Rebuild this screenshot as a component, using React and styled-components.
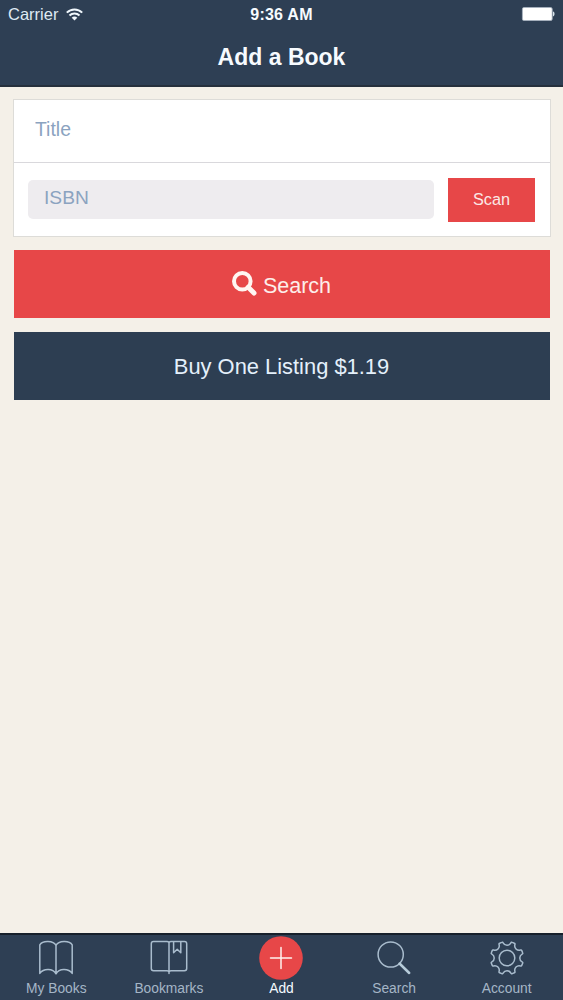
import React from "react";
import styled, { createGlobalStyle } from "styled-components";

const GlobalStyle = createGlobalStyle`
  * { box-sizing: border-box; }
  body { margin: 0; background: #f4f0e8; }
  button, input { font-family: inherit; }
`;

const Screen = styled.div`
  width: 100%;
  height: 1000px;
  display: flex;
  flex-direction: column;
  background: #f4f0e8;
  font-family: "Liberation Sans", Arial, sans-serif;
  overflow: hidden;
`;

const Header = styled.header`
  height: 87px;
  flex: none;
  background: #2e3f54;
  border-bottom: 2px solid #26303c;
  color: #f7fbff;
`;

const StatusBar = styled.div`
  height: 28px;
  display: grid;
  grid-template-columns: 1fr auto 1fr;
  align-items: center;
  padding: 0 8px;
`;

const Carrier = styled.div`
  display: flex;
  align-items: center;
  gap: 8px;
  font-size: 16.5px;
  line-height: 20px;
  color: #dfeaf3;
`;

const Clock = styled.div`
  padding-top: 2px;
  font-size: 16px;
  font-weight: 700;
  line-height: 20px;
  letter-spacing: 0.25px;
`;

const BatteryIcon = styled.svg`
  justify-self: end;
  display: block;
`;

const Title = styled.h1`
  margin: 0;
  padding-top: 16px;
  font-size: 23px;
  line-height: 27px;
  font-weight: 700;
  text-align: center;
`;

const Content = styled.main`
  flex: 1;
  padding: 12px 13px 0;
`;

const Card = styled.section`
  width: 538px;
  height: 138px;
  background: #fff;
  border: 1px solid #dddcd8;
  margin-bottom: 13px;
`;

const TitleRow = styled.div`
  height: 63px;
  border-bottom: 1px solid #d9d8dc;
`;

const IsbnRow = styled.div`
  display: flex;
  align-items: center;
  gap: 14px;
  height: 73px;
  padding: 0 14px;
`;

const Field = styled.input`
  border: 0;
  outline: 0;
  display: block;
  width: ${(p) => (p.$filled ? "406px" : "100%")};
  height: ${(p) => (p.$filled ? "39px" : "58px")};
  padding: ${(p) => (p.$filled ? "0 16px 4px" : "0 21px")};
  border-radius: ${(p) => (p.$filled ? "5px" : "0")};
  background: ${(p) => (p.$filled ? "#eeecef" : "transparent")};
  font-size: ${(p) => (p.$filled ? "19.2px" : "19.4px")};
  color: #8ba3c0;
  &::placeholder { color: #8ba3c0; opacity: 1; }
`;

const ScanButton = styled.button`
  width: 87px;
  height: 44px;
  border: 0;
  padding: 0;
  background: #e74748;
  color: #fbe9e6;
  font-size: 16.3px;
`;

const ActionButton = styled.button`
  display: flex;
  align-items: center;
  justify-content: center;
  gap: 6px;
  width: 536px;
  height: 68px;
  margin: 0 0 14px 0.5px;
  border: 0;
  padding: ${(p) => (p.$dark ? "2px" : "4px")} 0 0;
  background: ${(p) => (p.$dark ? "#2d3e52" : "#e74748")};
  color: ${(p) => (p.$dark ? "#e4f0fb" : "#fdeeea")};
  font-size: ${(p) => (p.$dark ? "21.9px" : "21.5px")};
`;

const SearchGlyph = styled.svg`
  display: block;
  margin-top: -6px;
`;

const TabBar = styled.nav`
  height: 67px;
  flex: none;
  display: grid;
  grid-template-columns: repeat(5, 1fr);
  background: #2e3f54;
  border-top: 2px solid #17202b;
`;

const Tab = styled.a`
  display: flex;
  flex-direction: column;
  align-items: center;
  color: ${(p) => (p.$active ? "#f4faff" : "#a5b6c7")};
  font-size: 13.8px;
  line-height: 16px;
`;

const TabIcon = styled.svg`
  display: block;
  width: 46px;
  height: 46px;
  fill: none;
  stroke: #a9bccd;
  stroke-width: 1.5;
  stroke-linecap: round;
  stroke-linejoin: round;
`;

function gearPath(cx, cy, r) {
  const at = (deg, radius = r) => {
    const a = (deg * Math.PI) / 180;
    return `${(cx + radius * Math.cos(a)).toFixed(2)} ${(cy + radius * Math.sin(a)).toFixed(2)}`;
  };
  let d = `M${at(14.5, r - 0.4)}`;
  for (let k = 0; k < 8; k += 1) {
    const mid = 22.5 + k * 45;
    d += `Q${at(mid - 7, r + 0.7)} ${at(mid - 4, r + 0.5)}`;
    d += `L${at(mid + 4, r + 0.5)}`;
    d += `Q${at(mid + 7, r + 0.7)} ${at(mid + 8, r - 0.4)}`;
    d += `C${at(mid + 12, r - 3.8)} ${at(mid + 33, r - 3.8)} ${at(mid + 37, r - 0.4)}`;
  }
  return `${d}Z`;
}

const icons = {
  books: (
    <path d="M23 10.5C20.5 5.3 9.5 5.3 6.8 9.8V38.4C10.5 33.2 20 33.2 23 38.8C26 33.2 35.5 33.2 39.2 38.4V9.8C36.5 5.3 25.5 5.3 23 10.5V38.8" />
  ),
  bookmarks: (
    <>
      <path d="M23 7.5C22.4 6.8 21.8 6.6 21 6.6H7.5C6.2 6.6 5.3 7.4 5.3 8.8V33.6C5.3 35 6.2 35.8 7.5 35.8H21C22 35.8 22.6 36.2 23 36.8C23.4 36.2 24 35.8 25 35.8H38.5C39.8 35.8 40.7 35 40.7 33.6V8.8C40.7 7.4 39.8 6.6 38.5 6.6H25C24.2 6.6 23.6 6.8 23 7.5V38.5" />
      <path d="M27.6 7V17.8L31.2 14.3L34.8 17.8V7" />
    </>
  ),
  add: (
    <>
      <circle cx="23" cy="23" r="21.8" fill="#e74748" stroke="none" />
      <path d="M12.5 23.1H33.5M23 12.6V33.6" stroke="#fff3ee" strokeWidth="1.5" />
    </>
  ),
  search: (
    <>
      <circle cx="19.7" cy="19.5" r="12.6" />
      <path d="M28.5 28.5L38.2 38" stroke="#b6cbd9" strokeWidth="2.5" />
    </>
  ),
  account: (
    <>
      <path d={gearPath(23, 23, 16)} />
      <circle cx="23" cy="23" r="7.8" />
    </>
  ),
};

const tabs = [
  ["books", "My Books"],
  ["bookmarks", "Bookmarks"],
  ["add", "Add"],
  ["search", "Search"],
  ["account", "Account"],
];

export default function App() {
  return (
    <Screen>
      <GlobalStyle />
      <Header>
        <StatusBar>
          <Carrier>
            Carrier
            <svg width="17" height="13" viewBox="0 0 17 13" fill="none" stroke="#f1f8fd" strokeWidth="2">
              <path d="M0.8 4.6C5.1 0.3 11.9 0.3 16.2 4.6M3.5 7.5C6.3 4.8 10.7 4.8 13.5 7.5" />
              <path d="M5.7 9.7C7.3 8.1 9.7 8.1 11.3 9.7L8.5 12.5Z" fill="#f1f8fd" stroke="none" />
            </svg>
          </Carrier>
          <Clock>9:36 AM</Clock>
          <BatteryIcon width="34" height="14" viewBox="0 0 34 14">
            <rect x="1.4" y="0.5" width="29.8" height="13" rx="1.5" fill="#fff" stroke="#a8b4c0" strokeWidth="0.8" />
            <path d="M32 4.6C34 5 34 9 32 9.4Z" fill="#d8e4ec" />
          </BatteryIcon>
        </StatusBar>
        <Title>Add a Book</Title>
      </Header>
      <Content>
        <Card>
          <TitleRow>
            <Field placeholder="Title" />
          </TitleRow>
          <IsbnRow>
            <Field $filled placeholder="ISBN" />
            <ScanButton>Scan</ScanButton>
          </IsbnRow>
        </Card>
        <ActionButton>
          <SearchGlyph width="25" height="25" viewBox="0 0 25 25" fill="none" stroke="#fff6f2">
            <circle cx="10.3" cy="10.3" r="8.3" strokeWidth="4" />
            <path d="M16.2 16.2L22 22" strokeWidth="5" strokeLinecap="round" />
          </SearchGlyph>
          Search
        </ActionButton>
        <ActionButton $dark>Buy One Listing $1.19</ActionButton>
      </Content>
      <TabBar>
        {tabs.map(([id, label]) => (
          <Tab key={id} $active={id === "add"}>
            <TabIcon viewBox="0 0 46 46">{icons[id]}</TabIcon>
            {label}
          </Tab>
        ))}
      </TabBar>
    </Screen>
  );
}
